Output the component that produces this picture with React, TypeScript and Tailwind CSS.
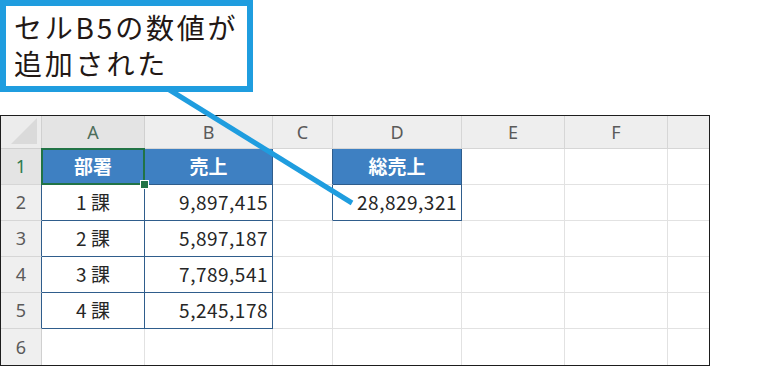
import React from "react";

const COLS = ["A", "B", "C", "D", "E", "F", ""];
const COL_W = "grid-cols-[41px_103px_128px_60px_129px_103px_103px_41px]";

type Cell = { text?: string; head?: boolean; align?: "center" | "right" };

// sheet contents, keyed by row then column index (0 = A)
const DATA: Record<number, Record<number, Cell>> = {
  1: { 0: { text: "部署", head: true }, 1: { text: "売上", head: true }, 3: { text: "総売上", head: true } },
  2: { 0: { text: "1 課", align: "center" }, 1: { text: "9,897,415", align: "right" }, 3: { text: "28,829,321", align: "right" } },
  3: { 0: { text: "2 課", align: "center" }, 1: { text: "5,897,187", align: "right" } },
  4: { 0: { text: "3 課", align: "center" }, 1: { text: "7,789,541", align: "right" } },
  5: { 0: { text: "4 課", align: "center" }, 1: { text: "5,245,178", align: "right" } },
};

function inTable(r: number, c: number) {
  if (c === 0 || c === 1) return r >= 1 && r <= 5;
  if (c === 3) return r >= 1 && r <= 2;
  return false;
}

function SheetCell({ r, c }: { r: number; c: number }) {
  const cell = DATA[r]?.[c];
  const rightBlue = inTable(r, c) || inTable(r, c + 1);
  const bottomBlue = inTable(r, c) || inTable(r + 1, c);
  const selected = r === 1 && c === 0;
  const last = c === 6;

  return (
    <div
      className={[
        "relative flex h-[36px] items-center text-[19px] text-[#262626]",
        last ? "" : "border-r",
        r === 6 ? "" : "border-b",
        rightBlue ? "border-r-[#2f5d8c]" : "border-r-[#e2e2e2]",
        bottomBlue ? "border-b-[#2f5d8c]" : "border-b-[#e2e2e2]",
        cell?.head ? "justify-center bg-[#3e80c2] font-bold text-white" : "",
        cell?.align === "center" ? "justify-center" : "",
        cell?.align === "right" ? "justify-end pr-[4px] tracking-[0.5px]" : "",
      ].join(" ")}
    >
      {cell?.text}
      {selected && (
        <>
          <div className="pointer-events-none absolute -left-[1px] -top-[1px] bottom-[-1px] right-[-1px] border-2 border-[#217346]" />
          <div className="absolute -bottom-[5px] -right-[5px] z-10 size-[9px] border border-white bg-[#217346]" />
        </>
      )}
    </div>
  );
}

export default function App() {
  const rows = [1, 2, 3, 4, 5, 6];

  return (
    <div className="relative h-[366px] w-[783px] overflow-hidden bg-white font-['Noto_Sans_CJK_JP',sans-serif]">
      <div className="h-[92px] w-[253px] border-[6px] border-[#1f9ddf] bg-white pl-[8px] pt-[3px] text-[28px] leading-[36px] tracking-[2.8px] text-[#231815]">
        <p>
          セルB5の数値が
          <br />
          追加された
        </p>
      </div>

      <div className="mt-[23px] h-[251px] w-[710px] border border-[#1d1d1d]">
        <div className={`grid ${COL_W}`}>
          {/* column headings */}
          <div className="relative h-[33px] border-b border-r border-[#d0d0d0] bg-[#ececec]">
            <svg className="absolute bottom-[4px] right-[4px]" width="26" height="26" viewBox="0 0 26 26">
              <polygon points="26,0 26,26 0,26" fill="#dadada" />
            </svg>
          </div>
          {COLS.map((l, i) => (
            <div
              key={i}
              className={[
                "flex h-[33px] items-center justify-center border-b text-[18px]",
                i === 6 ? "" : "border-r",
                i === 0 ? "border-[#d0d0d0] bg-[#e4e4e4] text-[#4d6e5b]" : "border-[#d6d6d6] bg-[#eeeeee] text-[#5a5a5a]",
              ].join(" ")}
            >
              <span className="font-['Noto_Sans',sans-serif]">{l}</span>
            </div>
          ))}

          {rows.map((r) => (
            <React.Fragment key={r}>
              <div
                className={[
                  "flex h-[36px] items-center justify-center border-r font-['Noto_Sans',sans-serif] text-[18px]",
                  r === 6 ? "" : "border-b border-b-[#d6d6d6]",
                  r <= 5 ? "border-r-[#2f5d8c]" : "border-r-[#d0d0d0]",
                  r === 1 ? "bg-[#e4e4e4] text-[#2f7a4f]" : "bg-[#efefef] text-[#5a5a5a]",
                ].join(" ")}
              >
                {r}
              </div>
              {COLS.map((_, c) => (
                <SheetCell key={c} r={r} c={c} />
              ))}
            </React.Fragment>
          ))}
        </div>
      </div>

      {/* leader from the note to D2 */}
      <svg className="pointer-events-none absolute left-0 top-0" width="783" height="366">
        <line x1="168" y1="89" x2="352" y2="203" stroke="#1f9ddf" strokeWidth="5" />
      </svg>
    </div>
  );
}
